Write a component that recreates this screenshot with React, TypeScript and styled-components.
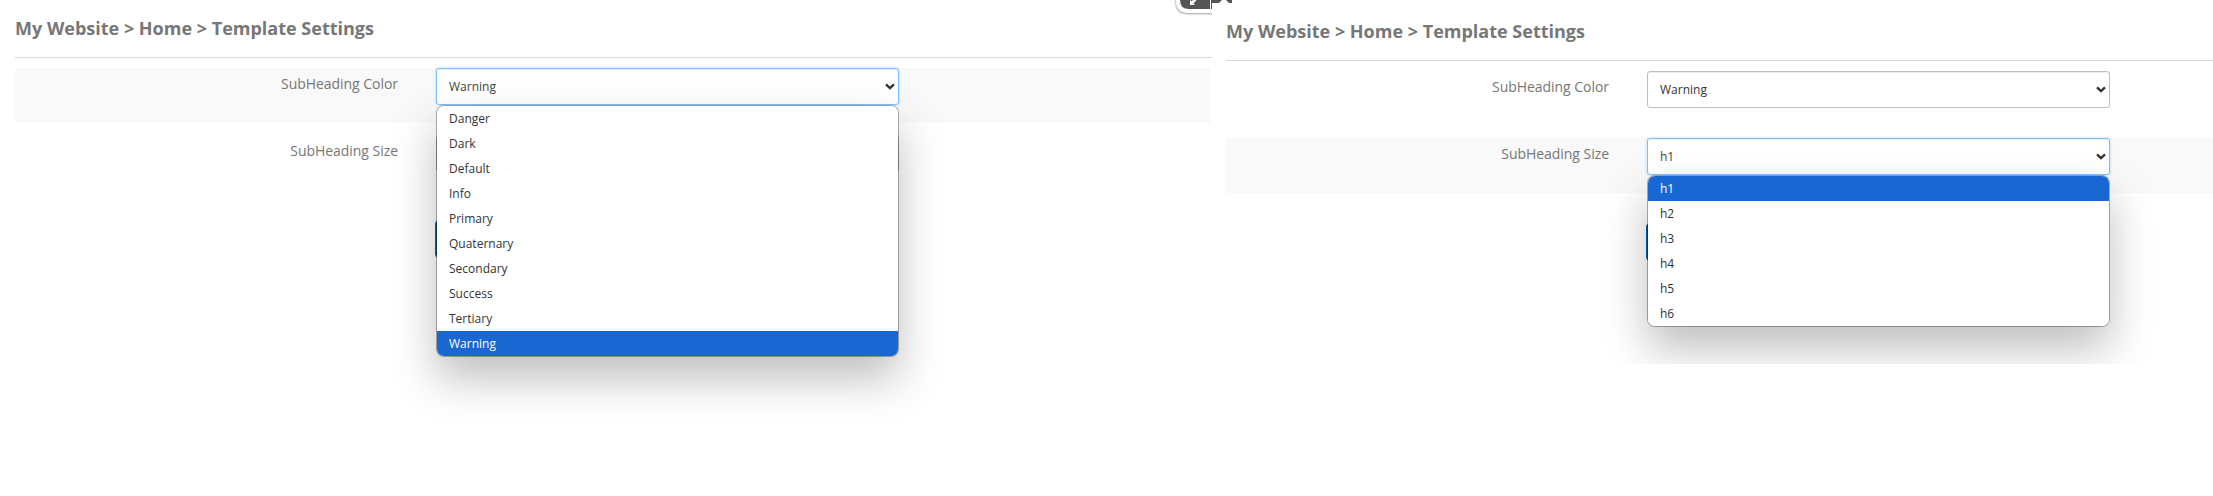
import React from "react";
import styled, { createGlobalStyle, css } from "styled-components";

const GlobalStyle = createGlobalStyle`
  * { box-sizing: border-box; }
  body { margin: 0; background: #fff; font-family: "Open Sans", sans-serif; color: #777; }
  svg { display: block; }
`;

const Page = styled.main`
  display: flex;
  width: 2213px;
  height: 496px;
  overflow: hidden;
`;

const Panel = styled.section<{ $width: number; $height: number; $padding: string }>`
  position: relative;
  flex: none;
  width: ${(p) => p.$width}px;
  height: ${(p) => p.$height}px;
  padding: ${(p) => p.$padding};
  overflow: hidden;
`;

const Header = styled.header`
  height: 58px;
  padding-top: 16px;
  border-bottom: 1px solid #dadada;
`;

const Title = styled.h1`
  margin: 0;
  font-size: 18px;
  line-height: 25px;
  font-weight: 700;
  color: #777;
  white-space: nowrap;
`;

const Form = styled.form<{ $inset: number }>`
  display: flex;
  flex-direction: column;
  gap: 12px;
  padding-top: 10px;
  margin-right: ${(p) => p.$inset}px;
`;

const Row = styled.div<{ $active?: boolean }>`
  display: flex;
  height: 55px;
  background: ${(p) => (p.$active ? "#f9f9f9" : "transparent")};
`;

const Label = styled.label`
  width: 383px;
  margin-right: 38px;
  padding-top: 5px;
  text-align: right;
  font-size: 14px;
  line-height: 21px;
  letter-spacing: -0.04px;
`;

const Field = styled.div`
  position: relative;
  width: 463px;
  height: 37px;
`;

const SelectBox = styled.div<{ $open?: boolean }>`
  display: flex;
  align-items: center;
  justify-content: space-between;
  height: 37px;
  padding: 0 3px 0 12px;
  border: 1px solid #bfbfbf;
  border-radius: 3px;
  background: #fff;
  color: #333;
  font-size: 12px;
  box-shadow: inset 0 1px 1px rgba(0, 0, 0, 0.075);
  ${(p) =>
    p.$open &&
    css`
      border-color: #7cc1fb;
      color: #444;
      box-shadow: inset 0 1px 1px rgba(0, 0, 0, 0.075), 0 0 3px rgba(102, 175, 233, 0.5);
    `}
`;

const Menu = styled.ul`
  position: absolute;
  z-index: 2;
  top: 37px;
  left: 0;
  width: 463px;
  margin: 0;
  padding: 0;
  list-style: none;
  border: 1px solid rgba(0, 0, 0, 0.31);
  border-radius: 8px;
  background: #fff;
  background-clip: padding-box;
  overflow: hidden;
  box-shadow: 0 22px 44px rgba(0, 0, 0, 0.25);
`;

const Option = styled.li<{ $selected?: boolean }>`
  height: 25px;
  padding-left: 12px;
  font-size: 12px;
  line-height: 25px;
  color: ${(p) => (p.$selected ? "#fff" : "#333")};
  background: ${(p) => (p.$selected ? "#1967d2" : "#fff")};
`;

const Actions = styled.div`
  display: flex;
  padding: 18px 0 0 420px;
`;

const SaveButton = styled.button`
  width: 100px;
  height: 38px;
  padding: 0;
  border: 1px solid #0a62ac;
  border-radius: 4px;
  background: #0a62ac;
`;

const CornerTool = styled.div`
  position: absolute;
  top: 0;
  right: 0;
  width: 40px;
  height: 20px;
`;

const EdgeTool = styled.div`
  position: absolute;
  top: 0;
  left: 0;
  width: 20px;
  height: 3px;
`;

const Chevron = () => (
  <svg width="10" height="8" viewBox="0 0 10 8" fill="none">
    <path d="M1 1.4 5 5.2 9 1.4" stroke="#333" strokeWidth="2.3" />
  </svg>
);

interface SelectProps {
  value?: string;
  options?: string[];
}

const Select = ({ value, options }: SelectProps) => (
  <Field>
    <SelectBox $open={!!options}>
      <span>{value}</span>
      <Chevron />
    </SelectBox>
    {options && (
      <Menu>
        {options.map((o) => (
          <Option key={o} $selected={o === value}>
            {o}
          </Option>
        ))}
      </Menu>
    )}
  </Field>
);

interface SettingsProps {
  colors?: string[];
  sizes?: string[];
  size?: string;
  inset?: number;
}

const Settings = ({ colors, sizes, size, inset = 0 }: SettingsProps) => (
  <>
    <Header>
      <Title>My Website &gt; Home &gt; Template Settings</Title>
    </Header>
    <Form $inset={inset}>
      <Row $active={!!colors}>
        <Label>SubHeading Color</Label>
        <Select value="Warning" options={colors} />
      </Row>
      <Row $active={!!sizes}>
        <Label>SubHeading Size</Label>
        <Select value={size} options={sizes} />
      </Row>
      <Actions>
        <SaveButton type="button" />
      </Actions>
    </Form>
  </>
);

const COLORS = ["Danger", "Dark", "Default", "Info", "Primary", "Quaternary", "Secondary", "Success", "Tertiary", "Warning"];
const SIZES = ["h1", "h2", "h3", "h4", "h5", "h6"];

export default function App() {
  return (
    <>
      <GlobalStyle />
      <Page>
        <Panel $width={1212} $height={496} $padding="0 0 0 15px">
          <Settings colors={COLORS} inset={2} />
          <CornerTool>
            <svg width="40" height="20" viewBox="0 0 40 20">
              <defs>
                <filter id="soft" x="-20%" y="-20%" width="150%" height="150%">
                  <feGaussianBlur stdDeviation="1.2" />
                </filter>
              </defs>
              <path d="M4 -4V2Q4 13.5 16 13.5H44V-4Z" fill="#777" filter="url(#soft)" />
              <path d="M4 -4V1Q4 13 16 13H40V-4Z" fill="#fff" />
              <path d="M8 -4V0Q8 9 17 9H38V-4Z" fill="#555" />
              <path d="M39 0H40V9H39Z" fill="#555" />
              <path d="M18 0V5H23L21.4 3.4 24.5 0.3 24.2 0H21L19.7 1.3Z" fill="#fff" />
            </svg>
          </CornerTool>
        </Panel>
        <Panel $width={1001} $height={364} $padding="3px 0 0 14px">
          <Settings sizes={SIZES} size="h1" />
          <EdgeTool>
            <svg width="20" height="3" viewBox="0 0 20 3">
              <path d="M0 0H20V3H0Z" fill="#555" />
              <path d="M7 3 10 0H14L17 3Z" fill="#fff" />
            </svg>
          </EdgeTool>
        </Panel>
      </Page>
    </>
  );
}
